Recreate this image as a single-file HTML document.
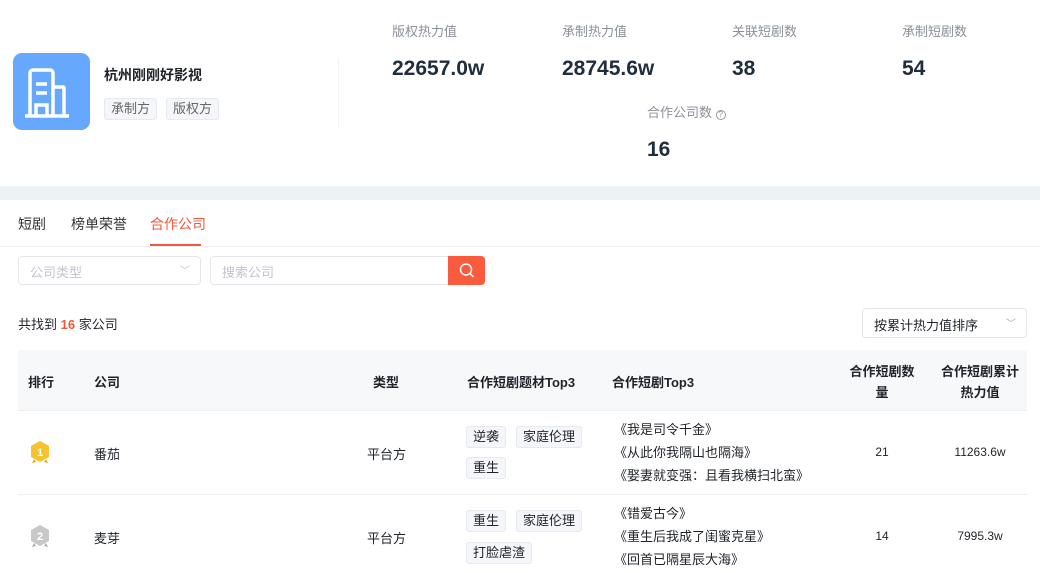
<!DOCTYPE html><html><head><meta charset="utf-8"><style>
*{margin:0;padding:0;box-sizing:border-box}
body{width:1040px;height:573px;overflow:hidden;background:#fff;font-family:"Liberation Sans","Noto Sans CJK SC",sans-serif;color:#1f2329;position:relative;font-size:13px}
.a{position:absolute}
.lbl{font-size:13px;color:#8a8f99}
.num{font-size:21px;font-weight:bold;color:#1f2d3d}
.tag{position:absolute;background:#f4f6f9;border:1px solid #e6e9ef;border-radius:3px;font-size:13px;color:#1f2329;height:22px;line-height:20px;padding:0 6px}
.th{position:absolute;font-size:13px;font-weight:bold;color:#1f2329}
.td{position:absolute;font-size:13px;color:#1f2329}
</style></head><body>
<div class="a" style="left:13px;top:53px;width:77px;height:77px;background:#66a8fd;border-radius:9px">
<svg width="77" height="77" viewBox="0 0 77 77"><g fill="none" stroke="#fff" stroke-width="3.5"><path d="M17 63V20a3 3 0 0 1 3-3h17a3 3 0 0 1 3 3v43M40 34h10a1 1 0 0 1 1 1v28M12 63h44M23 31h11M23 40h11M23 63V52h11v11"/></g></svg></div>
<div class="a" style="left:104px;top:65px;font-size:14px;font-weight:bold">杭州刚刚好影视</div>
<div class="tag" style="left:104px;top:98px;color:#666">承制方</div>
<div class="tag" style="left:166px;top:98px;color:#666">版权方</div>
<div class="a" style="left:338px;top:58px;width:1px;height:70px;background:#f3f3f3"></div>
<div class="a lbl" style="left:392px;top:21px">版权热力值</div><div class="a num" style="left:392px;top:57px">22657.0w</div>
<div class="a lbl" style="left:562px;top:21px">承制热力值</div><div class="a num" style="left:562px;top:57px">28745.6w</div>
<div class="a lbl" style="left:732px;top:21px">关联短剧数</div><div class="a num" style="left:732px;top:57px">38</div>
<div class="a lbl" style="left:902px;top:21px">承制短剧数</div><div class="a num" style="left:902px;top:57px">54</div>
<div class="a lbl" style="left:647px;top:102px">合作公司数 <span style="display:inline-block;width:10px;height:10px;border:1px solid #999;border-radius:50%;font-size:8px;line-height:8px;text-align:center">?</span></div><div class="a num" style="left:647px;top:138px">16</div>
<div class="a" style="left:0;top:186px;width:1040px;height:14px;background:#eef1f5"></div>
<div class="a" style="left:18px;top:214px;font-size:14px;color:#333">短剧</div>
<div class="a" style="left:71px;top:214px;font-size:14px;color:#333">榜单荣誉</div>
<div class="a" style="left:150px;top:214px;font-size:14px;color:#f0583d">合作公司</div>
<div class="a" style="left:150px;top:244px;width:51px;height:2px;background:#f0583d"></div>
<div class="a" style="left:0;top:246px;width:1040px;height:1px;background:#f0f0f0"></div>
<div class="a" style="left:18px;top:256px;width:183px;height:29px;border:1px solid #e4e6eb;border-radius:4px;color:#c0c4cc;padding:5px 11px">公司类型<span style="position:absolute;right:10px;top:5px;font-size:10px">﹀</span></div>
<div class="a" style="left:210px;top:256px;width:240px;height:29px;border:1px solid #e4e6eb;border-radius:4px 0 0 4px;color:#c0c4cc;padding:5px 11px">搜索公司</div>
<div class="a" style="left:448px;top:256px;width:37px;height:29px;background:#fa5a3d;border-radius:0 4px 4px 0"><svg width="37" height="29"><circle cx="18" cy="13.5" r="5.5" fill="none" stroke="#fff" stroke-width="1.5"/><path d="M22 17.5l3.5 3.5" stroke="#fff" stroke-width="1.5"/></svg></div>
<div class="a" style="left:18px;top:314px">共找到 <b style="color:#f0583d">16</b> 家公司</div>
<div class="a" style="left:862px;top:308px;width:165px;height:30px;border:1px solid #e4e6eb;border-radius:4px;padding:6px 11px">按累计热力值排序<span style="position:absolute;right:10px;top:6px;font-size:10px;color:#aaa">﹀</span></div>
<div class="a" style="left:18px;top:350px;width:1009px;height:60px;background:#f7f8fa"></div>
<div class="th" style="left:28px;top:372px">排行</div><div class="th" style="left:94px;top:372px">公司</div><div class="th" style="left:373px;top:372px">类型</div><div class="th" style="left:467px;top:372px">合作短剧题材Top3</div><div class="th" style="left:612px;top:372px">合作短剧Top3</div>
<div class="th" style="left:846px;top:361px;width:72px;text-align:center;line-height:21px">合作短剧数量</div><div class="th" style="left:936px;top:361px;width:88px;text-align:center;line-height:21px">合作短剧累计热力值</div>
<div class="a" style="left:18px;top:410px;width:1009px;height:1px;background:#eee"></div>
<div class="a" style="left:18px;top:494px;width:1009px;height:1px;background:#eee"></div>
<svg class="a" style="left:29px;top:439px" width="22" height="28"><path d="M11 2l9 5v11l-9 5-9-5V7z" fill="#f5c230"/><path d="M5 20l-2 4 4-1zM17 20l2 4-4-1z" fill="#e8a915"/><text x="11" y="17" font-size="11" font-weight="bold" fill="#fff" text-anchor="middle" font-family="Liberation Sans">1</text></svg>
<svg class="a" style="left:29px;top:523px" width="22" height="28"><path d="M11 2l9 5v11l-9 5-9-5V7z" fill="#c8c8c8"/><path d="M5 20l-2 4 4-1zM17 20l2 4-4-1z" fill="#aaa"/><text x="11" y="17" font-size="11" font-weight="bold" fill="#fff" text-anchor="middle" font-family="Liberation Sans">2</text></svg>
<div class="td" style="left:94px;top:444px">番茄</div><div class="td" style="left:367px;top:444px">平台方</div>
<div class="tag" style="left:466px;top:426px">逆袭</div><div class="tag" style="left:516px;top:426px">家庭伦理</div><div class="tag" style="left:466px;top:457px">重生</div>
<div class="td" style="left:614px;top:418px;line-height:23px">《我是司令千金》<br>《从此你我隔山也隔海》<br>《娶妻就变强：且看我横扫北蛮》</div>
<div class="td" style="left:846px;top:445px;width:72px;text-align:center;font-size:12px">21</div><div class="td" style="left:936px;top:445px;width:88px;text-align:center;font-size:12px">11263.6w</div>
<div class="td" style="left:94px;top:528px">麦芽</div><div class="td" style="left:367px;top:528px">平台方</div>
<div class="tag" style="left:466px;top:510px">重生</div><div class="tag" style="left:516px;top:510px">家庭伦理</div><div class="tag" style="left:466px;top:542px">打脸虐渣</div>
<div class="td" style="left:614px;top:502px;line-height:23px">《错爱古今》<br>《重生后我成了闺蜜克星》<br>《回首已隔星辰大海》</div>
<div class="td" style="left:846px;top:529px;width:72px;text-align:center;font-size:12px">14</div><div class="td" style="left:936px;top:529px;width:88px;text-align:center;font-size:12px">7995.3w</div>
</body></html>
